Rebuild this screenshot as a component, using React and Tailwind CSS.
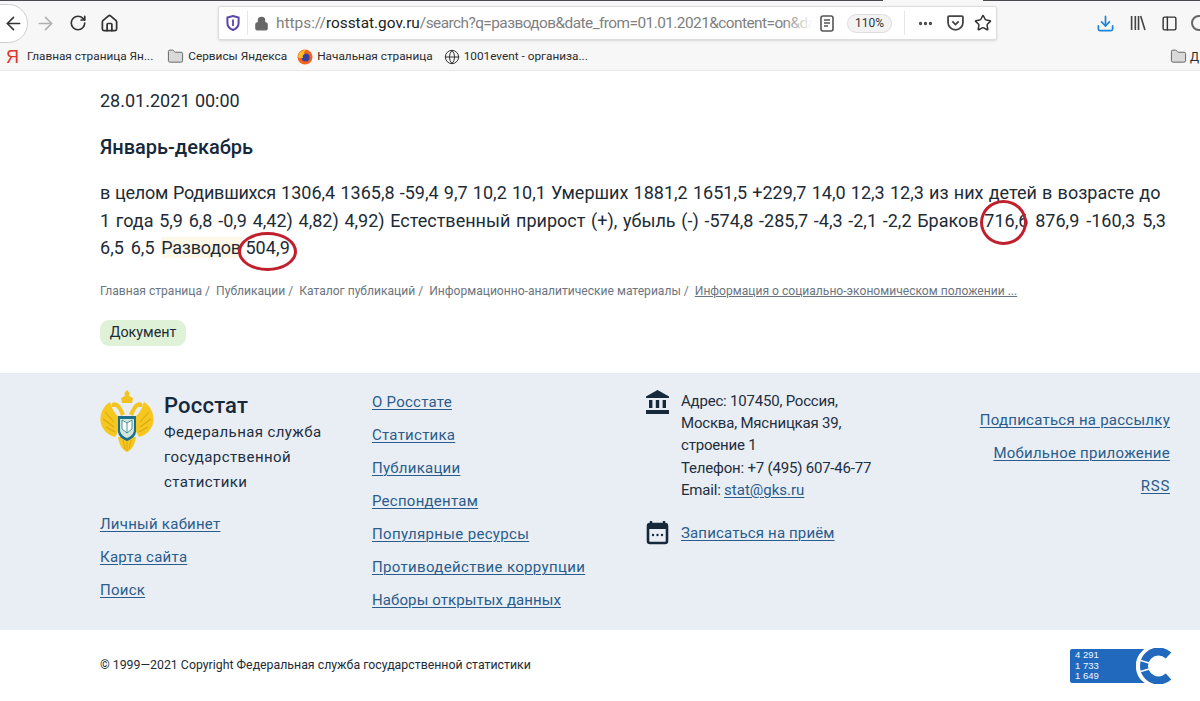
import React from "react";
import { ArrowLeft, ArrowRight, RotateCw, Home, Lock, Folder, Globe, MoreHorizontal, Star, Download, PanelLeft } from "lucide-react";

const F = "font-['Roboto','Noto_Sans',sans-serif]";

function Bookmark({ icon, label, cls = "" }) {
  return (
    <div className={`flex items-center gap-[4px] ${cls}`}>
      {icon}
      <span className="text-[11.8px] text-[#2b2b2b] whitespace-nowrap font-['Roboto',sans-serif]">{label}</span>
    </div>
  );
}

function FolderIcon() {
  return <Folder size={17} fill="#d9d9d9" stroke="#666" strokeWidth={1.4} />;
}

function Chrome() {
  return (
    <header className="h-[71px] bg-[#f7f7f8] border-b border-[#e8e8e8] flex flex-col overflow-hidden">
      <div className="h-px flex shrink-0">
        <div className="w-[883px] bg-[#4a4a50]" />
        <div className="w-[100px]" />
        <div className="flex-1 bg-[#4a4a50]" />
      </div>
      <div className="h-[44px] flex items-center shrink-0 [&>*]:shrink-0">
        <div className="w-[29px] h-[39px] -ml-[1px] rounded-r-full border border-[#cfcfcf] bg-white flex items-center">
          <ArrowLeft size={21} className="text-[#333] ml-[3px]" strokeWidth={1.8} />
        </div>
        <ArrowRight size={21} className="text-[#b0b0b0] ml-[7px]" strokeWidth={1.8} />
        <RotateCw size={18} className="text-[#333] ml-[13px]" strokeWidth={2.2} />
        <Home size={19} className="text-[#333] ml-[13px]" strokeWidth={2.2} />
        <div className="ml-[99px] h-[34px] w-[779px] bg-white border border-[#dcdcdc] rounded-[2px] shadow-sm flex items-center [&>*]:shrink-0">
          <svg width="14" height="16" viewBox="0 0 14 16" className="ml-[7px]">
            <path d="M7 1 L12.6 2.6 V8 C12.6 11.6 10 13.8 7 15 C4 13.8 1.4 11.6 1.4 8 V2.6 Z" fill="none" stroke="#5c46a8" strokeWidth="2" />
            <path d="M7 4.5 V11" stroke="#5c46a8" strokeWidth="1.8" />
          </svg>
          <div className="w-px h-[24px] bg-[#e6e6e6] ml-[7px]" />
          <Lock size={15} fill="#666" className="text-[#666] ml-[6px]" strokeWidth={2} />
          <div className="relative ml-[7px] w-[537px] overflow-hidden whitespace-nowrap text-[15.4px] leading-[22px] text-[#7f7f7f] font-['Roboto',sans-serif]">
            https://<span className="text-[#222]">rosstat.gov.ru</span><span className="-tracking-[0.55px]">/search?q=разводов&amp;date_from=01.01.2021&amp;content=on&amp;date_to</span>
            <div className="absolute right-0 top-0 bottom-0 w-[30px] bg-gradient-to-r from-transparent to-white" />
          </div>
          <svg width="14" height="17" viewBox="0 0 14 17" className="ml-[7px]">
            <rect x="1" y="1" width="12" height="15" rx="2" fill="none" stroke="#555" strokeWidth="1.6" />
            <path d="M4 5 H10 M4 8 H10 M4 11 H8" stroke="#555" strokeWidth="1.3" />
          </svg>
          <div className="ml-[13px] w-[45px] h-[19px] rounded-full border border-[#ddd] bg-[#f3f3f3] text-[12px] text-[#333] flex items-center justify-center font-['Roboto',sans-serif]">110%</div>
          <div className="w-px h-[24px] bg-[#e6e6e6] ml-[12px]" />
          <MoreHorizontal size={17} className="text-[#444] ml-[12px]" strokeWidth={2.6} />
          <svg width="17" height="16" viewBox="0 0 16 15" className="ml-[13px]">
            <path d="M2 1 H14 A1 1 0 0 1 15 2 V7 A7 7 0 0 1 1 7 V2 A1 1 0 0 1 2 1 Z" fill="none" stroke="#444" strokeWidth="1.7" />
            <path d="M5 6 L8 9 L11 6" fill="none" stroke="#444" strokeWidth="1.7" />
          </svg>
          <Star size={18} className="text-[#333] ml-[10px]" strokeWidth={2} />
        </div>
        <Download size={19} className="text-[#1f86d6] ml-[99px]" strokeWidth={2.2} />
        <svg width="16" height="16" viewBox="0 0 15 15" className="ml-[15px]">
          <path d="M1.5 1 V14 M5 1 V14 M8 1 V14 M10 1 L14 14" stroke="#444" strokeWidth="1.5" fill="none" />
        </svg>
        <PanelLeft size={17} className="text-[#333] ml-[15px]" strokeWidth={2} />
        <div className="ml-[13px] w-[16px] h-[16px] rounded-full border-2 border-[#666]" />
      </div>
      <div className="flex-1 flex items-center pl-[6px] pb-[2px]">
        <span className="text-[#e2352b] text-[18px] leading-none font-['Liberation_Sans',sans-serif] w-[14px]">Я</span>
        <Bookmark cls="ml-[7px]" icon={null} label="Главная страница Ян..." />
        <Bookmark cls="ml-[14px]" icon={<FolderIcon />} label="Сервисы Яндекса" />
        <Bookmark
          cls="ml-[10px]"
          icon={
            <svg width="16" height="16" viewBox="0 0 16 16">
              <circle cx="8" cy="8" r="7.5" fill="#f2651f" />
              <circle cx="8.6" cy="8.6" r="4" fill="#3a3f9e" />
              <path d="M1 8 C2 3 5 1 9 1 C6 3 7 5 9 5 C6 5 5 7 6 9 C3 9 2 9 1 8Z" fill="#ffc02c" />
            </svg>
          }
          label="Начальная страница"
        />
        <Bookmark cls="ml-[11px]" icon={<Globe size={16} className="text-[#333]" strokeWidth={1.5} />} label="1001event - организа..." />
        <div className="ml-auto flex items-center gap-[3px] w-[30px] shrink-0 overflow-hidden">
          <div className="shrink-0"><FolderIcon /></div>
          <span className="text-[12px] text-[#2b2b2b] font-['Roboto',sans-serif]">Д</span>
        </div>
      </div>
    </header>
  );
}

function Ring({ children, cls }) {
  return (
    <span className="relative">
      {children}
      <span className={`absolute border-[3px] border-[#c0202e] rounded-[50%] ${cls}`} />
    </span>
  );
}

function Main() {
  return (
    <main className={`h-[302px] px-[100px] pt-[19px] text-[#1d2b36] ${F}`}>
      <div className="text-[18px] leading-[22px]">28.01.2021 00:00</div>
      <h2 className="mt-[23px] text-[20px] leading-[24px] font-medium text-[#15293a]">Январь-декабрь</h2>
      <p className="mt-[20px] text-[18px] leading-[27.5px] whitespace-nowrap">
        <span className="block [word-spacing:0.75px]"><span className="-tracking-[0.25px]">в целом Родившихся</span> 1306,4 1365,8 -59,4 9,7 10,2 10,1 Умерших 1881,2 1651,5 +229,7 14,0 12,3 12,3 из них детей в возрасте до</span>
        <span className="block [word-spacing:1.25px]">
          1 года 5,9 6,8 -0,9 4,42) 4,82) 4,92) Естественный прирост (+), убыль (-) -574,8 -285,7 -4,3 -2,1 -2,2 Браков{" "}
          <Ring cls="left-[-4px] top-[-10px] w-[47px] h-[45px]">716,</Ring><span className="[word-spacing:2.5px]">6 876,9 -160,3 5,3</span>
        </span>
        <span className="block [word-spacing:2px] tracking-[0.1px]">
          6,5 6,5 <span className="bg-[#fdf8e8] -tracking-[0.25px]">Разводов</span>{" "}
          <span className="-ml-[2px]"><Ring cls="left-[-7px] top-[-5px] w-[59px] h-[39px]">504,9</Ring></span>
        </span>
      </p>
      <nav className="mt-[20px] flex items-center text-[12.08px] leading-[18px] text-[#6b7580] whitespace-nowrap">
        <span>Главная страница /</span>
        <span className="ml-[6px]">Публикации /</span>
        <span className="ml-[6px]">Каталог публикаций /</span>
        <span className="ml-[6px]">Информационно-аналитические материалы /</span>
        <span className="ml-[6px] underline">Информация о социально-экономическом положении ...</span>
      </nav>
      <div className="mt-[20px] flex w-[86px] items-center justify-center h-[26px] rounded-[9px] bg-[#dff2d8] text-[14.3px] text-[#1d2b36]">Документ</div>
    </main>
  );
}

function L({ children, t = "tracking-[0.25px]" }) {
  return <a className={`text-[#2a5d8c] underline underline-offset-2 decoration-1 whitespace-nowrap ${t}`}>{children}</a>;
}

function Eagle() {
  return (
    <svg width="54" height="63" viewBox="0 0 54 63" className="shrink-0">
      <path d="M27 0 L29.5 3 L29 6 L33 8 L32 13 H22 L21 8 L25 6 L24.5 3 Z" fill="#f2c21c" />
      <path d="M25 24 C22 18 20 14 17 13 C13 11 10 14 12 17 L16 17 C18 19 20 22 21 26 Z" fill="#f4c51e" />
      <path d="M29 24 C32 18 34 14 37 13 C41 11 44 14 42 17 L38 17 C36 19 34 22 33 26 Z" fill="#f4c51e" />
      <path d="M10 12 C3 16 0 24 0.5 31 C1 38 7 45 15 47 L19 40 V27 C15 24 12 19 10 12 Z" fill="#f6c81f" />
      <path d="M44 12 C51 16 54 24 53.5 31 C53 38 47 45 39 47 L35 40 V27 C39 24 42 19 44 12 Z" fill="#f6c81f" />
      <path d="M5 22 L14 32 M3 29 L14 37 M6 37 L15 42 M49 22 L40 32 M51 29 L40 37 M48 37 L39 42" stroke="#dca716" strokeWidth="1.1" />
      <path d="M18 47 C19 54 22 60 27 62 C32 60 35 54 36 47 Z" fill="#f6c81f" />
      <path d="M23 50 L25 59 M31 50 L29 59 M27 50 V61" stroke="#dca716" strokeWidth="1" />
      <path d="M18 26 H36 V41 C36 46 32 49 27 51 C22 49 18 46 18 41 Z" fill="#1c6f8c" />
      <path d="M20 29 H34 V40 C34 44 30 47 27 48 C24 47 20 44 20 40 Z" fill="#cfe6d8" />
      <path d="M22 30 L27 33 L32 30 V39 L27 43 L22 39 Z" fill="#f8fbf6" stroke="#2a7f8c" strokeWidth="0.8" />
      <path d="M27 33 V43" stroke="#2a7f8c" strokeWidth="0.8" />
    </svg>
  );
}

function Footer() {
  return (
    <footer className={`h-[257px] bg-[#e9edf4] flex pl-[100px] pr-[30px] pt-[17px] text-[15px] ${F}`}>
      <div className="w-[272px] shrink-0">
        <div className="flex gap-[10px]">
          <Eagle />
          <div className="text-[#1d2f40]">
            <div className="text-[22px] leading-[30px] font-medium text-[#15293a] tracking-[0.2px] mt-[1px]">Росстат</div>
            <div className="leading-[25px] tracking-[0.4px] -mt-[1px]">Федеральная служба<br />государственной<br />статистики</div>
          </div>
        </div>
        <div className="mt-[18px] flex flex-col gap-[11px] leading-[22px] items-start">
          <L>Личный кабинет</L>
          <L>Карта сайта</L>
          <L>Поиск</L>
        </div>
      </div>
      <div className="w-[274px] shrink-0 flex flex-col gap-[11px] leading-[22px] items-start mt-[1px]">
        <L>О Росстате</L>
        <L>Статистика</L>
        <L>Публикации</L>
        <L>Респондентам</L>
        <L t="tracking-[0.33px]">Популярные ресурсы</L>
        <L t="tracking-[0.33px]">Противодействие коррупции</L>
        <L t="tracking-[0.1px]">Наборы открытых данных</L>
      </div>
      <div className="w-[300px] shrink-0 text-[#1d2f40]">
        <div className="flex gap-[12px]">
          <svg width="23" height="24" viewBox="0 0 23 24" className="shrink-0">
            <path d="M11.5 0 L23 6.5 V8 H0 V6.5 Z" fill="#15293a" />
            <rect x="3" y="10" width="3.4" height="8" fill="#15293a" />
            <rect x="9.8" y="10" width="3.4" height="8" fill="#15293a" />
            <rect x="16.6" y="10" width="3.4" height="8" fill="#15293a" />
            <rect x="0" y="20" width="23" height="4" fill="#15293a" />
          </svg>
          <div className="leading-[22.2px] -tracking-[0.2px]">
            Адрес: 107450, Россия,<br />Москва, Мясницкая 39,<br />строение 1<br />Телефон: +7 (495) 607-46-77<br />Email: <L t="tracking-[0px]">stat@gks.ru</L>
          </div>
        </div>
        <div className="flex items-center gap-[12px] mt-[20px]">
          <svg width="23" height="24" viewBox="0 0 23 24" className="shrink-0">
            <path d="M5 0 V4 M18 0 V4" stroke="#15293a" strokeWidth="2.4" />
            <rect x="2" y="3" width="19" height="19" rx="2" fill="none" stroke="#15293a" strokeWidth="2.6" />
            <rect x="2" y="3" width="19" height="5" fill="#15293a" />
            <circle cx="7" cy="14" r="1.2" fill="#15293a" />
            <circle cx="11.5" cy="14" r="1.2" fill="#15293a" />
            <circle cx="16" cy="14" r="1.2" fill="#15293a" />
          </svg>
          <L t="tracking-[0.15px]">Записаться на приём</L>
        </div>
      </div>
      <div className="flex-1 flex flex-col items-end gap-[11px] leading-[22px] mt-[19px]">
        <L>Подписаться на рассылку</L>
        <L>Мобильное приложение</L>
        <L t="tracking-[0.7px]">RSS</L>
      </div>
    </footer>
  );
}

function Bottom() {
  return (
    <div className={`h-[71px] bg-white flex items-center justify-between pl-[100px] pr-[30px] text-[12.33px] text-[#1d2b36] ${F}`}>
      <span>© 1999—2021 Copyright Федеральная служба государственной статистики</span>
      <div className="relative w-[100px] h-[36px] mt-[1px]">
        <div className="w-[77px] h-[34px] mt-[1px] bg-[#2069bd] rounded-[2px] text-[#f0f6fd] text-[9.5px] leading-[10.5px] pl-[5px] pt-[1px] font-['Liberation_Sans',sans-serif]">
          4 291<br />1 733<br />1 649
        </div>
        <svg width="36" height="36" viewBox="0 0 36 36" className="absolute left-[66px] top-0">
          <circle cx="19" cy="18" r="18" fill="#fff" />
          <path d="M32 8 A15 15 0 1 0 32 28" fill="none" stroke="#fff" strokeWidth="12" />
          <path d="M32.5 7.5 A14.5 14.5 0 1 0 32.5 28.5" fill="none" stroke="#2069bd" strokeWidth="8" />
          <path d="M3 12 L13 15 M3 24 L13 21" stroke="#fff" strokeWidth="1.4" />
        </svg>
      </div>
    </div>
  );
}

export default function App() {
  return (
    <div className="w-[1200px] h-[701px] overflow-hidden bg-white">
      <Chrome />
      <Main />
      <Footer />
      <Bottom />
    </div>
  );
}
